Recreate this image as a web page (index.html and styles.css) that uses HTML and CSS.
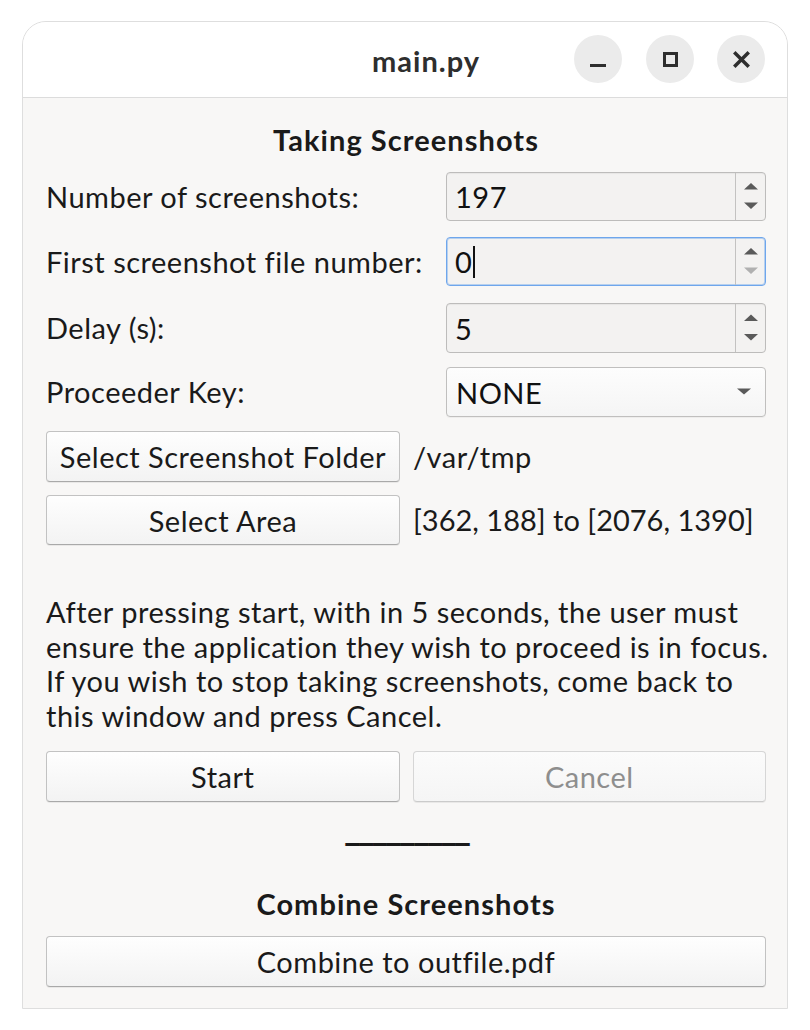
FILE: index.html
```html
<!DOCTYPE html>
<html lang="en">
<head>
<meta charset="utf-8">
<title>main.py</title>
<link rel="stylesheet" href="styles.css">
</head>
<body>
<div class="window">
  <header class="titlebar">
    <div class="tb-left"></div>
    <div class="title">main.py</div>
    <div class="controls">
      <span class="ctl"><svg width="48" height="48" viewBox="0 0 48 48"><rect x="16" y="29" width="16" height="3" fill="#2e2e2e"/></svg></span>
      <span class="ctl"><svg width="48" height="48" viewBox="0 0 48 48"><rect x="18.5" y="18.5" width="12" height="12" fill="none" stroke="#2e2e2e" stroke-width="3"/></svg></span>
      <span class="ctl"><svg width="48" height="48" viewBox="0 0 48 48"><path d="M18.5 18.5 L30.5 30.5 M30.5 18.5 L18.5 30.5" stroke="#2e2e2e" stroke-width="3.5" stroke-linecap="square"/></svg></span>
    </div>
  </header>
  <main class="content">
    <div class="heading h-first">Taking Screenshots</div>

    <div class="form-row row1">
      <span class="label">Number of screenshots:</span>
      <div class="spin">
        <span class="value">197</span>
        <span class="arrows"><svg width="29" height="47" viewBox="0 0 29 47"><polygon points="8,16.5 22,16.5 15,10" fill="#5a5a5a"/><polygon points="8,29.5 22,29.5 15,36" fill="#5a5a5a"/></svg></span>
      </div>
    </div>

    <div class="form-row row2">
      <span class="label">First screenshot file number:</span>
      <div class="spin focused">
        <span class="value">0<span class="caret"></span></span>
        <span class="arrows"><svg width="29" height="47" viewBox="0 0 29 47"><polygon points="8,16.5 22,16.5 15,10" fill="#5a5a5a"/><polygon points="8,29.5 22,29.5 15,36" fill="#b0b0b0"/></svg></span>
      </div>
    </div>

    <div class="form-row row3">
      <span class="label">Delay (s):</span>
      <div class="spin tall">
        <span class="value">5</span>
        <span class="arrows"><svg width="29" height="48" viewBox="0 0 29 48"><polygon points="8,17 22,17 15,10.5" fill="#5a5a5a"/><polygon points="8,30 22,30 15,36.5" fill="#5a5a5a"/></svg></span>
      </div>
    </div>

    <div class="form-row row4">
      <span class="label">Proceeder Key:</span>
      <div class="combo">
        <span class="value">NONE</span>
        <svg class="combo-arrow" width="14" height="7" viewBox="0 0 14 7"><polygon points="0,0.5 14,0.5 7,6.5" fill="#5a5a5a"/></svg>
      </div>
    </div>

    <div class="btn-row row5">
      <button class="btn tall-btn">Select Screenshot Folder</button>
      <span class="label">/var/tmp</span>
    </div>

    <div class="btn-row row6">
      <button class="btn">Select Area</button>
      <span class="label coords">[362, 188] to [2076, 1390]</span>
    </div>

    <p class="info">After pressing start, with in 5 seconds, the user must<br>ensure the application they wish to proceed is in focus.<br>If you wish to stop taking screenshots, come back to<br>this window and press Cancel.</p>

    <div class="action-row">
      <button class="btn tall-btn">Start</button>
      <button class="btn tall-btn disabled">Cancel</button>
    </div>

    <div class="separator">_________</div>

    <div class="heading h-second">Combine Screenshots</div>

    <button class="btn tall-btn wide">Combine to outfile.pdf</button>
  </main>
</div>
</body>
</html>
```

FILE: styles.css
```css
* { box-sizing: border-box; }

html, body {
  margin: 0;
  padding: 0;
  background: #ffffff;
}

body {
  font-family: Lato, "Noto Sans", sans-serif;
  font-size: 29px;
  letter-spacing: 0.5px;
  color: #1a1a1a;
}

.window {
  margin: 21px 0 0 22px;
  width: 766px;
  border: 1px solid #dedede;
  border-radius: 24px 24px 0 0;
  background: #f8f7f6;
  overflow: hidden;
}

.titlebar {
  height: 76px;
  background: #ffffff;
  border-bottom: 1px solid #dcdcdc;
  display: grid;
  grid-template-columns: 1fr auto 1fr;
  align-items: center;
}

.title {
  font-weight: 700;
  font-size: 29px;
  letter-spacing: 1px;
  color: #2e2e2e;
  padding-left: 42px;
  margin-top: 2px;
}

.controls {
  justify-self: end;
  display: flex;
  gap: 23.5px;
  padding-right: 22px;
  margin-top: -1px;
}

.ctl {
  width: 48px;
  height: 48px;
  border-radius: 50%;
  background: #ebebeb;
  display: block;
}

.ctl svg { display: block; }

.content {
  padding: 0 21px 21px 23px;
  display: flex;
  flex-direction: column;
}

.heading {
  font-weight: 700;
  letter-spacing: 1.05px;
  text-align: center;
  height: 30px;
  line-height: 30px;
}

.h-first { margin-top: 27px; }
.h-second { margin-top: 47px; }

.form-row {
  display: grid;
  grid-template-columns: 1fr 320px;
  align-items: center;
}

.row1 { margin-top: 17px; }
.row2 { margin-top: 16px; }
.row3 { margin-top: 17px; }
.row4 { margin-top: 14px; }
.row5 { margin-top: 14px; }
.row6 { margin-top: 13px; }

.label {
  white-space: nowrap;
  line-height: 34px;
}

.coords { letter-spacing: 0; }

.spin {
  height: 49px;
  border: 1px solid #bdbcbb;
  border-radius: 4px;
  background: #f3f2f1;
  display: flex;
  align-items: stretch;
  box-shadow: inset 0 1px 1px rgba(0, 0, 0, 0.05);
}

.spin.tall { height: 50px; }

.spin.focused {
  border-color: #6ea6ec;
  box-shadow: inset 0 0 0 1px rgba(110, 166, 236, 0.45);
}

.value {
  flex: 1;
  display: flex;
  align-items: center;
  padding-left: 8px;
  color: #111111;
}

.caret {
  display: inline-block;
  width: 2px;
  height: 32px;
  background: #111111;
  margin-left: 1px;
}

.arrows {
  width: 30px;
  border-left: 1px solid #c3c2c1;
  display: flex;
  align-items: center;
  justify-content: center;
}

.arrows svg { display: block; }

.combo {
  height: 50px;
  border: 1px solid #c0bfbe;
  border-radius: 4px;
  background: linear-gradient(#fdfdfd, #f5f5f5);
  display: flex;
  align-items: center;
  padding-right: 14px;
  box-shadow: 0 1px 0 rgba(0, 0, 0, 0.04);
}

.combo .value { padding-left: 9px; }

.combo-arrow { display: block; margin-top: -2px; }

.btn-row {
  display: grid;
  grid-template-columns: 354px 1fr;
  column-gap: 13px;
  align-items: center;
}

.btn {
  font-family: inherit;
  font-size: 29px;
  letter-spacing: 0.5px;
  color: #1a1a1a;
  height: 50px;
  padding: 0;
  border: 1px solid #c2c2c2;
  border-bottom-color: #a9a9a9;
  border-radius: 4px;
  background: linear-gradient(#fefefe, #f3f3f3);
  box-shadow: 0 1px 0 rgba(0, 0, 0, 0.06);
  text-align: center;
  line-height: 1;
}

.tall-btn { height: 51px; }

.btn.disabled {
  color: #8e8e8e;
  border-color: #d6d6d6;
  border-bottom-color: #cbcbcb;
  background: linear-gradient(#fbfbfb, #f5f5f5);
}

.info {
  margin: 50px 0 0 0;
  line-height: 34.5px;
  white-space: nowrap;
}

.action-row {
  margin-top: 18px;
  display: grid;
  grid-template-columns: 1fr 1fr;
  column-gap: 13px;
}

.separator {
  margin-top: 10px;
  height: 30px;
  line-height: 30px;
  text-align: center;
  font-weight: 700;
  font-size: 36px;
  letter-spacing: -3px;
  overflow: visible;
}

.wide {
  margin-top: 17px;
  width: 100%;
}
```
